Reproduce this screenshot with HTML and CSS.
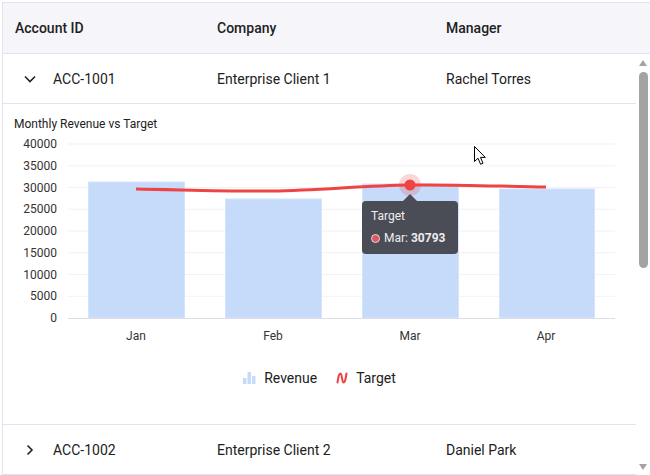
FILE: index.html
```html
<!DOCTYPE html>
<html lang="en">
<head>
  <meta charset="UTF-8" />
  <title>Accounts</title>
  <link rel="stylesheet" href="styles.css">
</head>
<body>

<div class="grid">
  <div class="grid-head">
    <div class="cell">Account ID</div>
    <div class="cell">Company</div>
    <div class="cell">Manager</div>
  </div>

  <div class="grid-body">
    <div class="rows">
      <div class="row">
        <div class="cell first">
          <svg class="chev" width="12" height="12" viewBox="0 0 12 12"><path d="M1 3.5 L6 8.5 L11 3.5" /></svg>
          ACC-1001
        </div>
        <div class="cell">Enterprise Client 1</div>
        <div class="cell">Rachel Torres</div>
      </div>

      <div class="detail">
        <svg class="chart" width="633" height="246" viewBox="0 0 633 246">
          <text class="title" x="11" y="24">Monthly Revenue vs Target</text>

          <g class="grid-lines">
            <line x1="65" x2="612" y1="40" y2="40" />
            <line x1="65" x2="612" y1="61.75" y2="61.75" />
            <line x1="65" x2="612" y1="83.5" y2="83.5" />
            <line x1="65" x2="612" y1="105.25" y2="105.25" />
            <line x1="65" x2="612" y1="127" y2="127" />
            <line x1="65" x2="612" y1="148.75" y2="148.75" />
            <line x1="65" x2="612" y1="170.5" y2="170.5" />
            <line x1="65" x2="612" y1="192.25" y2="192.25" />
          </g>

          <g class="y-labels">
            <text x="54" y="44">40000</text>
            <text x="54" y="65.75">35000</text>
            <text x="54" y="87.5">30000</text>
            <text x="54" y="109.25">25000</text>
            <text x="54" y="131">20000</text>
            <text x="54" y="152.75">15000</text>
            <text x="54" y="174.5">10000</text>
            <text x="54" y="196.25">5000</text>
            <text x="54" y="218">0</text>
          </g>

          <g class="bars">
            <rect x="85.5" y="78" width="96" height="136" />
            <rect x="222.5" y="95" width="96" height="119" />
            <rect x="359.5" y="80" width="96" height="134" />
            <rect x="496.5" y="85" width="95" height="129" />
          </g>

          <line class="axis" x1="65" x2="612" y1="214.5" y2="214.5" />

          <path class="target" d="M133 85 C178.7 85.7 224.3 87.7 270 87 C315.7 86.3 361.5 81.7 407 81 C452.5 80.3 497.7 82.3 543 83" />
          <circle class="halo" cx="407" cy="81" r="11" />
          <circle class="dot" cx="407" cy="81" r="5.5" />

          <g class="x-labels">
            <text x="133" y="236">Jan</text>
            <text x="270" y="236">Feb</text>
            <text x="407" y="236">Mar</text>
            <text x="543" y="236">Apr</text>
          </g>
        </svg>

        <div class="legend">
          <span class="legend-item">
            <svg width="13" height="12" viewBox="0 0 13 12"><rect x="0" y="6" width="3.5" height="6" fill="#c6dafa"/><rect x="4.5" y="0" width="3.5" height="12" fill="#c6dafa"/><rect x="9" y="4" width="3.5" height="8" fill="#c6dafa"/></svg>
            Revenue
          </span>
          <span class="legend-item">
            <svg width="12" height="12" viewBox="0 0 12 12"><path d="M1.5 10.5 C2.5 4 3 1.5 4.5 1.5 C6 1.5 6 10.5 7.5 10.5 C9 10.5 9.5 8 10.5 1.5" fill="none" stroke="#ef4444" stroke-width="2" stroke-linecap="round"/></svg>
            Target
          </span>
        </div>

        <div class="tooltip">
          <div class="tip-title">Target</div>
          <div class="tip-line"><span class="tip-dot"></span>Mar: <b>30793</b></div>
        </div>

        <svg class="cursor" width="13" height="20" viewBox="0 0 13 20"><path d="M0.5 0.5 L0.5 15.5 L4 12.2 L6.6 18.3 L9 17.2 L6.5 11.4 L11.3 11.4 Z" fill="#fff" stroke="#000" stroke-width="1"/></svg>
      </div>

      <div class="row">
        <div class="cell first">
          <svg class="chev" width="12" height="12" viewBox="0 0 12 12"><path d="M3.5 1.5 L8 6 L3.5 10.5" /></svg>
          ACC-1002
        </div>
        <div class="cell">Enterprise Client 2</div>
        <div class="cell">Daniel Park</div>
      </div>
    </div>

    <div class="scrollbar">
      <div class="arrow up"></div>
      <div class="thumb"></div>
      <div class="arrow down"></div>
    </div>
  </div>
</div>

</body>
</html>
```

FILE: styles.css
```css
body {
  margin: 0;
  padding: 2px 0 0 2px;
  font-family: Roboto, "Liberation Sans", sans-serif;
  font-size: 14px;
  color: #212121;
  background: #fff;
  overflow: hidden;
}
.grid {
  width: 647px;
  border: 1px solid #e3e3ef;
  border-right: none;
}
.grid-head {
  display: grid;
  grid-template-columns: 202px 229px 1fr;
  height: 50px;
  align-items: center;
  background: #f6f6fa;
  border-bottom: 1px solid #e3e3ef;
  font-weight: 500;
}
.cell {
  padding-left: 12px;
}
.grid-body {
  display: flex;
  height: 421px;
  overflow: hidden;
}
.rows {
  width: 633px;
}
.row {
  display: grid;
  grid-template-columns: 202px 229px 1fr;
  height: 49px;
  align-items: center;
  border-bottom: 1px solid #e3e3ef;
}
.cell.first {
  display: flex;
  align-items: center;
  padding-left: 21px;
  gap: 17px;
}
.chev path {
  fill: none;
  stroke: #222;
  stroke-width: 1.6;
}
.detail {
  position: relative;
  height: 320px;
  border-bottom: 1px solid #e3e3ef;
}
.chart {
  display: block;
}
.chart text {
  font-family: Roboto, "Liberation Sans", sans-serif;
  font-size: 12px;
  fill: #333;
}
.chart .title {
  fill: #222;
}
.y-labels text {
  text-anchor: end;
}
.x-labels text {
  text-anchor: middle;
}
.grid-lines line {
  stroke: #f1f1f7;
  stroke-width: 1;
}
.axis {
  stroke: #dcdcea;
  stroke-width: 1;
}
.bars rect {
  fill: #c6dafa;
  stroke: #d6e4fb;
  stroke-width: 1;
}
.target {
  fill: none;
  stroke: #ef4444;
  stroke-width: 3;
}
.halo {
  fill: rgba(239, 68, 68, 0.22);
}
.dot {
  fill: #ef4444;
}
.legend {
  display: flex;
  justify-content: center;
  gap: 19px;
  margin-top: 18px;
  line-height: 20px;
}
.legend-item {
  display: flex;
  align-items: center;
  gap: 8px;
}
.tooltip {
  position: absolute;
  left: 359px;
  top: 97px;
  width: 96px;
  height: 53px;
  box-sizing: border-box;
  padding: 4px 9px;
  background: #4a4c56;
  border-radius: 4px;
  color: #eee;
  font-size: 12px;
  line-height: 22px;
}
.tooltip::before {
  content: "";
  position: absolute;
  left: 41px;
  top: -7px;
  border-left: 7px solid transparent;
  border-right: 7px solid transparent;
  border-bottom: 7px solid #4a4c56;
}
.tip-line {
  display: flex;
  align-items: center;
}
.tip-dot {
  width: 7px;
  height: 7px;
  border-radius: 50%;
  background: #e35563;
  border: 1px solid #ddd;
  margin-right: 4px;
}
.tip-line b {
  margin-left: 3px;
}
.cursor {
  position: absolute;
  left: 471px;
  top: 42px;
}
.scrollbar {
  width: 14px;
  display: flex;
  flex-direction: column;
  align-items: flex-start;
  padding-left: 3px;
}
.arrow {
  width: 0;
  height: 0;
  border-left: 4.5px solid transparent;
  border-right: 4.5px solid transparent;
}
.arrow.up {
  margin-top: 6px;
  border-bottom: 6px solid #a3a3a3;
}
.arrow.down {
  margin-top: auto;
  margin-bottom: 5px;
  border-top: 6px solid #a3a3a3;
}
.thumb {
  width: 9px;
  height: 196px;
  margin-top: 6px;
  border-radius: 5px;
  background: #a3a3a3;
}
```
